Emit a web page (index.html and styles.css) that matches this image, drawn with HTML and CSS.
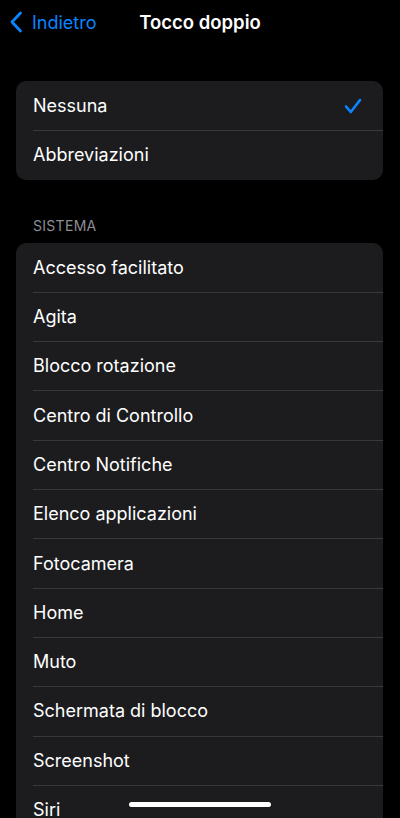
FILE: index.html
```html
<!DOCTYPE html>
<html lang="it">
<head>
    <meta charset="UTF-8">
    <meta name="viewport" content="width=device-width, initial-scale=1.0">
    <title>Tocco doppio</title>
    <link rel="stylesheet" href="styles.css">
</head>
<body>

    <header class="nav">
        <a class="back" href="#">
            <svg class="chevron" width="14" height="22" viewBox="0 0 14 22">
                <path d="M11.5 2 L3 11 L11.5 20" fill="none" stroke="#0a84ff" stroke-width="2.8" stroke-linecap="round" stroke-linejoin="round"/>
            </svg>
            <span>Indietro</span>
        </a>
        <h1 class="title">Tocco doppio</h1>
    </header>

    <ul class="group first">
        <li class="row">
            <span>Nessuna</span>
            <svg class="check" width="18" height="16" viewBox="0 0 18 16">
                <path d="M2 8.5 L6.8 14 L16 2" fill="none" stroke="#0a84ff" stroke-width="2.6" stroke-linecap="round" stroke-linejoin="round"/>
            </svg>
        </li>
        <li class="row"><span>Abbreviazioni</span></li>
    </ul>

    <h2 class="section">SISTEMA</h2>
    <ul class="group">
        <li class="row"><span>Accesso facilitato</span></li>
        <li class="row"><span>Agita</span></li>
        <li class="row"><span>Blocco rotazione</span></li>
        <li class="row"><span>Centro di Controllo</span></li>
        <li class="row"><span>Centro Notifiche</span></li>
        <li class="row"><span>Elenco applicazioni</span></li>
        <li class="row"><span>Fotocamera</span></li>
        <li class="row"><span>Home</span></li>
        <li class="row"><span>Muto</span></li>
        <li class="row"><span>Schermata di blocco</span></li>
        <li class="row"><span>Screenshot</span></li>
        <li class="row"><span>Siri</span></li>
    </ul>

    <div class="home-indicator"></div>

</body>
</html>
```

FILE: styles.css
```css
html, body {
    margin: 0;
    height: 818px;
    overflow: hidden;
}
body {
    background-color: #000;
    color: #fff;
    font-family: Inter, "Noto Sans", sans-serif;
    -webkit-font-smoothing: antialiased;
}
.nav {
    position: relative;
    height: 44px;
    display: flex;
    align-items: center;
}
.back {
    display: flex;
    align-items: center;
    gap: 9px;
    padding-left: 9px;
    color: #0a84ff;
    text-decoration: none;
    font-size: 18px;
}
.title {
    position: absolute;
    left: 0;
    right: 0;
    margin: 0;
    text-align: center;
    font-size: 18.5px;
    font-weight: 600;
    pointer-events: none;
}
.group {
    list-style: none;
    margin: 0 17px 0 16px;
    padding: 0;
    background-color: #1c1c1e;
    border-radius: 10px;
    overflow: hidden;
}
.group.first {
    margin-top: 37px;
}
.row {
    position: relative;
    height: 49.3px;
    display: flex;
    align-items: center;
    justify-content: space-between;
    padding: 0 21px 0 17px;
    font-size: 18px;
}
.row + .row::before {
    content: "";
    position: absolute;
    top: 0;
    left: 17px;
    right: 0;
    height: 1px;
    background-color: #38383a;
}
.check {
    margin-top: 1px;
}
.section {
    margin: 36px 0 7px 33px;
    font-size: 14px;
    font-weight: 400;
    color: #8d8d93;
    letter-spacing: 0.3px;
    line-height: 20px;
}
.home-indicator {
    position: absolute;
    left: 129px;
    top: 802px;
    width: 142px;
    height: 5px;
    border-radius: 3px;
    background-color: #fff;
}
```
